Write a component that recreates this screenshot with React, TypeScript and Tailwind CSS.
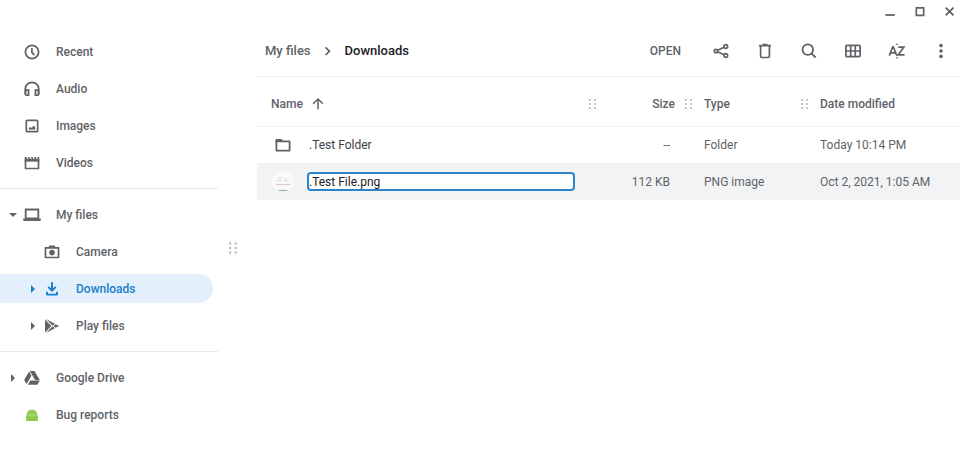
import type { ReactNode } from "react";
import { clsx } from "clsx";

type Entry = {
  label: string;
  icon: ReactNode;
  expand?: "open" | "closed";
  nested?: boolean;
  active?: boolean;
};

function Icon({ children, className = "size-5" }: { children: ReactNode; className?: string }) {
  return (
    <svg viewBox="0 0 20 20" className={clsx("shrink-0", className)} fill="none" stroke="currentColor" aria-hidden="true">
      {children}
    </svg>
  );
}

const ClockIcon = (
  <Icon>
    <circle cx="10" cy="10" r="6.6" strokeWidth="1.8" />
    <path d="M9.9 6v4.3l2.6 2.8" strokeWidth="1.7" />
  </Icon>
);

const HeadphonesIcon = (
  <Icon>
    <path d="M3.4 15.6V9.6a6.6 6.2 0 0 1 13.2 0v6" strokeWidth="1.8" />
    <path d="M3.4 11.2h3.2v5H4.6a1.2 1.2 0 0 1-1.2-1.2zM16.6 11.2h-3.2v5h2a1.2 1.2 0 0 0 1.2-1.2z" strokeWidth="1.7" />
  </Icon>
);

const ImageIcon = (
  <Icon>
    <rect x="4.3" y="4.3" width="11.4" height="11.4" rx="0.8" strokeWidth="1.7" />
    <path d="M6.8 13.5v-1.6l1.5-1 1.5 1.2 1.8-2.6 1.8 2.2v1.8z" fill="currentColor" stroke="none" />
  </Icon>
);

const MovieIcon = (
  <Icon>
    <path d="M3.5 7.4h13v8.1h-13z" strokeWidth="1.7" />
    <path d="M2.7 4h1.6l1.3 2.3h1.2L5.6 4h1.8l1.3 2.3h1.2L8.7 4h1.8l1.3 2.3H13L11.8 4h1.8l1.3 2.3h1.2L15 4h2.3v4.4H2.7z" fill="currentColor" stroke="none" />
  </Icon>
);

const LaptopIcon = (
  <Icon>
    <path d="M3.7 4.5h12.6v8.8H3.7z" strokeWidth="1.8" />
    <path d="M1.2 13.4h17.6v1.4a1.2 1.2 0 0 1-1.2 1.2H2.4a1.2 1.2 0 0 1-1.2-1.2z" fill="currentColor" stroke="none" />
  </Icon>
);

const CameraIcon = (
  <Icon>
    <path d="M3.5 5.8h13v9.7h-13z" strokeWidth="1.7" strokeLinejoin="round" />
    <path d="M6.2 5.8L7.4 3.6h5.2l1.2 2.2z" fill="currentColor" stroke="none" />
    <circle cx="10" cy="10.6" r="2.8" fill="currentColor" stroke="none" />
  </Icon>
);

const DownloadIcon = (
  <Icon>
    <path d="M10 3.2v8M6.2 7.9l3.8 3.8 3.8-3.8" strokeWidth="2" />
    <path d="M5 12.8v2.8h10v-2.8" strokeWidth="1.9" strokeLinejoin="round" />
  </Icon>
);

const PlayIcon = (
  <Icon>
    <g fill="currentColor" stroke="none">
      <path d="M3 3.6l6.4 6.4L3 16.4z" />
      <path d="M4 3l8.8 4.7-2.1 2zM4 17l8.8-4.7-2.1-2z" />
      <path d="M13.4 8.2l3.8 1.8-3.8 1.8-1.8-1.8z" />
    </g>
  </Icon>
);

const DriveIcon = (
  <Icon>
    <g fill="currentColor" stroke="none">
      <path d="M7.1 3.5l2.3 4.2-4.7 8.4-2.6-4.1z" />
      <path d="M7.7 3.1h4.7l5.4 8.9h-4.7z" />
      <path d="M8.2 12.6h9.6l-2.4 4.1H5.9z" />
    </g>
  </Icon>
);

const AndroidIcon = (
  <Icon className="size-5 text-[#94c94f]">
    <path d="M4.6 9.4C4.8 6.6 6.9 4.8 10 4.8s5.2 1.8 5.4 4.6z" fill="currentColor" stroke="none" />
    <path d="M4 10.2h12V15a1 1 0 0 1-1 1H5a1 1 0 0 1-1-1z" fill="currentColor" stroke="none" />
    <path d="M4.6 9.8h10.8" stroke="#9ccd5c" strokeWidth="1.2" />
  </Icon>
);

const groups: Entry[][] = [
  [
    { label: "Recent", icon: ClockIcon },
    { label: "Audio", icon: HeadphonesIcon },
    { label: "Images", icon: ImageIcon },
    { label: "Videos", icon: MovieIcon },
  ],
  [
    { label: "My files", icon: LaptopIcon, expand: "open" },
    { label: "Camera", icon: CameraIcon, nested: true },
    { label: "Downloads", icon: DownloadIcon, nested: true, expand: "closed", active: true },
    { label: "Play files", icon: PlayIcon, nested: true, expand: "closed" },
  ],
  [
    { label: "Google Drive", icon: DriveIcon, expand: "closed" },
    { label: "Bug reports", icon: AndroidIcon },
  ],
];

function Grip({ className }: { className: string }) {
  return (
    <svg viewBox="0 0 8 12" className={clsx("shrink-0 fill-current", className)} aria-hidden="true">
      {[1, 5, 9].map((y) => (
        <g key={y}>
          <rect x="0" y={y} width="2" height="2" />
          <rect x="5" y={y} width="2" height="2" />
        </g>
      ))}
    </svg>
  );
}

function SidebarItem({ entry }: { entry: Entry }) {
  return (
    <li className="flex h-[37px] items-center">
      <a
        href="#"
        aria-current={entry.active ? "page" : undefined}
        className={clsx(
          "mr-[5px] flex h-[29px] flex-1 items-center rounded-r-full",
          entry.nested ? "pl-6" : "pl-1",
          entry.active && "bg-[#e3effb] text-[#1a7fc9]",
        )}
      >
        <span className="flex w-[18px] justify-center">
          {entry.expand && (
            <svg viewBox="0 0 8 8" className="size-2 fill-current" aria-hidden="true">
              <path d={entry.expand === "open" ? "M0 2h8L4 6z" : "M2 0v8l4-4z"} />
            </svg>
          )}
        </span>
        {entry.icon}
        <span className="ml-[14px]">{entry.label}</span>
      </a>
    </li>
  );
}

function ToolButton({ label, children }: { label: string; children: ReactNode }) {
  return (
    <button type="button" aria-label={label} className="grid size-8 place-items-center">
      {children}
    </button>
  );
}

function WindowControls() {
  return (
    <div className="flex h-6 justify-end gap-[10px]">
      <button type="button" aria-label="Minimize" className="grid w-5 place-items-center">
        <Icon><path d="M5.4 13h9.4" strokeWidth="1.8" /></Icon>
      </button>
      <button type="button" aria-label="Maximize" className="grid w-5 place-items-center">
        <Icon><path d="M6.3 5.9h7.4v7.4H6.3z" strokeWidth="1.7" /></Icon>
      </button>
      <button type="button" aria-label="Close" className="grid w-5 place-items-center">
        <Icon><path d="M5.7 5.6l7.8 7.8M13.5 5.6l-7.8 7.8" strokeWidth="1.8" /></Icon>
      </button>
    </div>
  );
}

function Toolbar() {
  return (
    <div className="flex h-[53px] items-center gap-3 border-b border-[#eceef0] pt-0.5 pr-[3px] pl-2">
      <nav aria-label="Breadcrumb" className="flex flex-1 items-center text-[13px]">
        <a href="#">My files</a>
        <svg viewBox="0 0 10 10" className="mx-3 size-[10px]" fill="none" stroke="currentColor" strokeWidth="1.7" aria-hidden="true">
          <path d="M2.6 1.4l3.8 3.8L2.6 9" />
        </svg>
        <a href="#" aria-current="page" className="text-[#202124]">Downloads</a>
      </nav>
      <button type="button" className="mr-2 h-8 px-1">OPEN</button>
      <ToolButton label="Share">
        <Icon>
          <g strokeWidth="1.7">
            <circle cx="5" cy="10" r="1.7" />
            <circle cx="14.8" cy="5.5" r="1.8" />
            <circle cx="14.8" cy="14.5" r="1.8" />
            <path d="M6.6 9.2l6.5-2.9M6.6 10.8l6.5 2.9" />
          </g>
        </Icon>
      </ToolButton>
      <ToolButton label="Delete">
        <Icon>
          <path d="M5.6 4.8v10.5c0 .7.5 1.2 1.1 1.2h6.6c.7 0 1.1-.5 1.1-1.2V4.8" strokeWidth="1.7" />
          <path d="M4 4.6h12M7.6 3.5h4.8" strokeWidth="1.7" />
        </Icon>
      </ToolButton>
      <ToolButton label="Search">
        <Icon>
          <circle cx="8.8" cy="8.6" r="5.3" strokeWidth="1.8" />
          <path d="M12.5 12.4l4.2 4.2" strokeWidth="1.9" />
        </Icon>
      </ToolButton>
      <ToolButton label="Switch to thumbnail view">
        <Icon>
          <rect x="2.9" y="4.4" width="14.2" height="11.2" rx="1" strokeWidth="1.8" />
          <path d="M2.9 10h14.2M7.7 4.4v11.2M12.3 4.4v11.2" strokeWidth="1.7" />
        </Icon>
      </ToolButton>
      <ToolButton label="Sort options">
        <Icon>
          <path d="M2.3 14.6L5.8 5.8h.5l3.5 8.8M3.5 11.9h5.1M11.2 6.2h5.6l-5.6 7.7h6.4" strokeWidth="1.7" />
          <path d="M8.4 3.8L10 2.2l1.6 1.6zM8.4 16.2L10 17.8l1.6-1.6z" fill="currentColor" stroke="none" />
        </Icon>
      </ToolButton>
      <ToolButton label="More">
        <Icon>
          <g fill="currentColor" stroke="none">
            <circle cx="10" cy="4.6" r="1.8" />
            <circle cx="10" cy="10" r="1.8" />
            <circle cx="10" cy="15.4" r="1.8" />
          </g>
        </Icon>
      </ToolButton>
    </div>
  );
}

function FileTable() {
  return (
    <table className="w-full table-fixed text-left">
      <colgroup>
        <col />
        <col className="w-24" />
        <col className="w-[116px]" />
        <col className="w-[148px]" />
      </colgroup>
      <thead>
        <tr className="h-[49px] border-b border-[#f0f1f3]">
          <th className="pt-1.5 pr-[3px] pl-[14px] font-medium">
            <div className="flex items-center">
              Name
              <Icon className="ml-[5px] size-5">
                <path d="M10 15.2V5.2M5.2 9.8L10 5l4.8 4.8" strokeWidth="1.5" />
              </Icon>
              <Grip className="ml-auto h-3 w-2 text-[#c6c9cd]" />
            </div>
          </th>
          <th className="pt-1.5 pr-[3px] font-medium">
            <div className="flex items-center justify-end gap-[10px]">
              Size
              <Grip className="h-3 w-2 text-[#c6c9cd]" />
            </div>
          </th>
          <th className="pt-1.5 pr-[3px] pl-2 font-medium">
            <div className="flex items-center justify-between">
              Type
              <Grip className="h-3 w-2 text-[#c6c9cd]" />
            </div>
          </th>
          <th className="pt-1.5 pl-2 font-medium">Date modified</th>
        </tr>
      </thead>
      <tbody className="font-normal">
        <tr className="h-[37px]">
          <td className="pl-[15px]">
            <div className="flex items-center gap-[15px] text-[#3c4043]">
              <span className="flex w-[22px] justify-center text-[#5f6368]">
                <Icon>
                  <path d="M3.4 6.4h13.2v9.2H3.4z" strokeWidth="1.8" strokeLinejoin="round" />
                  <path d="M2.5 7V5a1 1 0 0 1 1-1h4.8L10.2 6v1z" fill="currentColor" stroke="none" />
                </Icon>
              </span>
              .Test Folder
            </div>
          </td>
          <td className="pr-[26px] text-right">--</td>
          <td className="pl-2">Folder</td>
          <td className="pl-2">Today 10:14 PM</td>
        </tr>
        <tr className="h-[37px] bg-[#f1f3f4]">
          <td className="pr-[25px] pl-[15px]">
            <div className="flex items-center gap-[13px]">
              <svg viewBox="0 0 22 22" className="size-[22px] shrink-0" aria-hidden="true">
                <circle cx="11" cy="11" r="11" fill="#fafafb" />
                <path d="M6 7h4M12 8h3" stroke="#ecc9cb" strokeWidth="1.2" />
                <path d="M4 10h6M12 10h5" stroke="#d9d9df" />
                <path d="M4 13.5h14" stroke="#e3c6ca" strokeWidth="1.2" />
                <path d="M6.5 19.5h9" stroke="#a4a7ab" strokeWidth="1.2" />
              </svg>
              <input
                type="text"
                aria-label="Rename file"
                defaultValue=".Test File.png"
                className="h-[19px] min-w-0 flex-1 rounded-sm border-2 border-[#2b83cb] bg-white text-[#202124] outline-none"
              />
            </div>
          </td>
          <td className="pr-[26px] text-right">112 KB</td>
          <td className="pl-2">PNG image</td>
          <td className="pl-2">Oct 2, 2021, 1:05 AM</td>
        </tr>
      </tbody>
    </table>
  );
}

export default function App() {
  return (
    <div className="flex min-h-screen bg-white font-['Roboto',sans-serif] text-[12px] font-medium text-[#5f6368]">
      <aside className="w-[218px] shrink-0 pt-[33px]">
        {groups.map((group, i) => (
          <ul key={group[0].label} className={clsx(i > 0 && "mt-[7px] border-t border-[#e8eaed] pt-[7px]")}>
            {group.map((entry) => (
              <SidebarItem key={entry.label} entry={entry} />
            ))}
          </ul>
        ))}
      </aside>
      <div className="flex w-[39px] shrink-0 justify-center self-start pt-[241px] pr-[9px]">
        <Grip className="h-[14px] w-[9px] text-[#bdc1c6]" />
      </div>
      <main className="min-w-0 flex-1">
        <WindowControls />
        <Toolbar />
        <FileTable />
      </main>
    </div>
  );
}
